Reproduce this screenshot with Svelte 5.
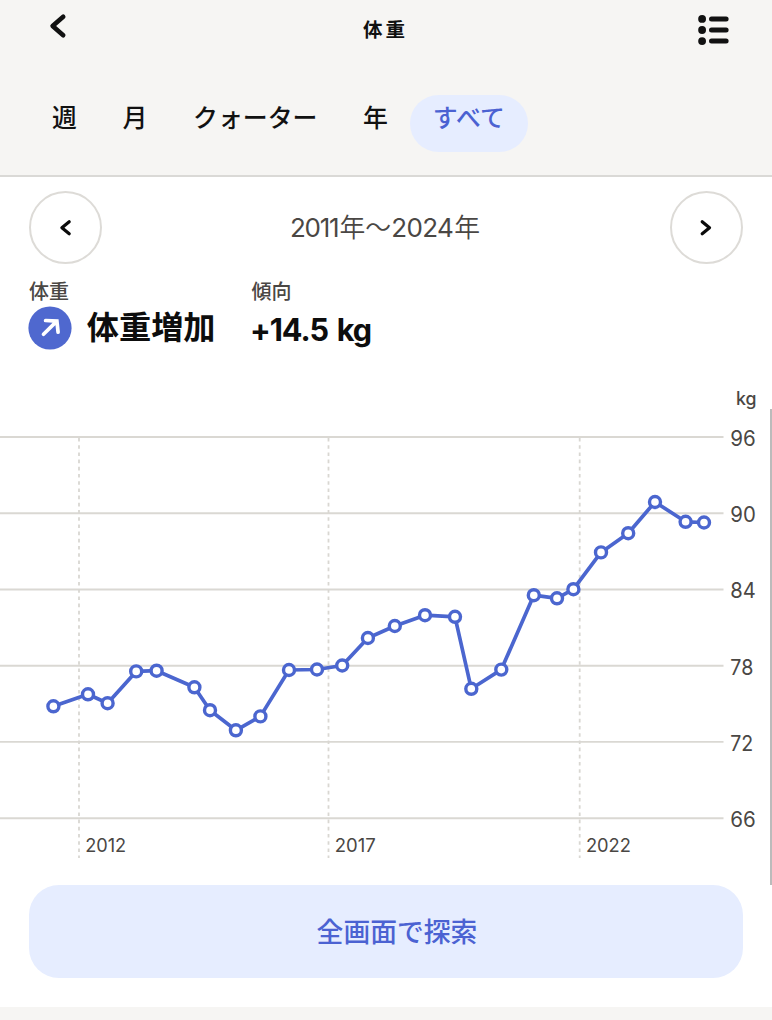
<script>
  const tabs = ['週', '月', 'クォーター', '年', 'すべて'];
  let active = $state('すべて');
  const ticks = [
    { label: '96', y: 57 },
    { label: '90', y: 133.3 },
    { label: '84', y: 209.5 },
    { label: '78', y: 285.8 },
    { label: '72', y: 361.9 },
    { label: '66', y: 438.2 }
  ];
  const years = [
    { label: '2012', x: 79, w: 41 },
    { label: '2017', x: 328.5, w: 41 },
    { label: '2022', x: 579.7, w: 45 }
  ];
  const points = [
    [53.4, 326.3], [88, 314.3], [107.6, 323.2], [136.2, 291.4], [156.6, 290.7],
    [194.4, 307.3], [210, 330.2], [235.9, 350.3], [260.4, 336.4], [289, 290],
    [317, 289.5], [342.2, 285.5], [367.9, 258], [394.8, 246], [425, 235.2],
    [455, 236.8], [471.3, 308.8], [501.3, 289.6], [533.8, 215.2], [557, 218.3],
    [573.4, 209.2], [601, 172.4], [628.2, 153.2], [655, 122], [685.6, 141.8], [704, 142.5]
  ];
  const line = points.map((p) => p.join(',')).join(' ');
</script>

<div class="screen">
  <header>
    <div class="bar">
      <button class="back" aria-label="戻る">
        <svg width="18" height="26" viewBox="0 0 18 26"><path d="M14.2 3.7 3.6 13l10.6 9.3" fill="none" stroke="#111" stroke-width="4.6" stroke-linecap="round" stroke-linejoin="round" /></svg>
      </button>
      <h1>体重</h1>
      <button class="list" aria-label="一覧">
        <svg width="32" height="32" viewBox="0 0 32 32" fill="#111">
          {#each [4.9, 16, 27.1] as y}
            <circle cx="4.1" cy={y} r="3.9" />
            <rect x="11" y={y - 2.5} width="19.6" height="5" rx="2.5" />
          {/each}
        </svg>
      </button>
    </div>
    <nav>
      {#each tabs as tab}
        <button class="tab" class:active={tab === active} onclick={() => (active = tab)}>{tab}</button>
      {/each}
    </nav>
  </header>

  <main>
    <div class="range">
      <button class="round" aria-label="前へ">
        <svg width="14" height="18" viewBox="0 0 14 18"><path d="M10.2 2.8 2.9 8.8l7.3 6" fill="none" stroke="#0b0b0b" stroke-width="3.2" stroke-linecap="round" stroke-linejoin="round" /></svg>
      </button>
      <div class="dates"><span class="y11">2011</span><span class="cj">年〜</span><span class="y24">2024</span><span class="cj">年</span></div>
      <button class="round" aria-label="次へ">
        <svg width="14" height="18" viewBox="0 0 14 18"><path d="M3.2 2.8 10.5 8.8l-7.3 6" fill="none" stroke="#0b0b0b" stroke-width="3.2" stroke-linecap="round" stroke-linejoin="round" /></svg>
      </button>
    </div>

    <section class="stats">
      <div class="stat first">
        <div class="label">体重</div>
        <div class="value">
          <svg class="arrow" width="44" height="44" viewBox="0 0 44 44">
            <circle cx="22" cy="22" r="21.6" fill="#4f68cf" />
            <path d="M15.5 28.2 28.6 15.4M17.6 14.5 28.9 15.1 30.1 26.2" fill="none" stroke="#fff" stroke-width="3.7" stroke-linecap="round" stroke-linejoin="miter" />
          </svg>
          <span>体重増加</span>
        </div>
      </div>
      <div class="stat">
        <div class="label">傾向</div>
        <div class="value num">+14.5 kg</div>
      </div>
    </section>

    <svg class="chart" width="772" height="500" viewBox="0 0 772 500">
      <text class="unit" x="736" y="25" textLength="20.5" lengthAdjust="spacingAndGlyphs">kg</text>
      {#each ticks as t}
        <line x1="0" x2="723.5" y1={t.y} y2={t.y} stroke="#dad8d3" stroke-width="1.9" />
        <text class="tick" x="730.3" y={t.y + 8.7} textLength={t.label[0] === '7' ? 23 : 25.5} lengthAdjust="spacingAndGlyphs">{t.label}</text>
      {/each}
      {#each years as year}
        <line x1={year.x} x2={year.x} y1="58" y2="478" stroke="#d9d7d2" stroke-width="1.8" stroke-dasharray="3.6 3.6" />
        <text class="year" x={year.x + 6.2} y="472" textLength={year.w} lengthAdjust="spacingAndGlyphs">{year.label}</text>
      {/each}
      <polyline points={line} fill="none" stroke="#4b66cf" stroke-width="3.7" stroke-linejoin="round" />
      {#each points as [x, y]}
        <circle cx={x} cy={y} r="5.5" fill="#fff" stroke="#4b66cf" stroke-width="3.4" />
      {/each}
    </svg>

    <button class="explore">全画面で探索</button>
    <div class="scrollbar"></div>
  </main>
</div>

<style>
  :global(body) { margin: 0; background: #f6f5f3; }
  .screen {
    width: 772px;
    height: 1020px;
    overflow: hidden;
    background: #f6f5f3;
    color: #111;
    font-family: Inter, 'Noto Sans CJK JP', sans-serif;
  }
  button { border: 0; margin: 0; padding: 0; background: none; color: inherit; font-family: inherit; cursor: pointer; }
  svg { display: block; }
  header { height: 177px; box-sizing: border-box; border-bottom: 2px solid #dad9d6; }
  .bar { display: grid; grid-template-columns: 1fr auto 1fr; height: 60px; align-items: center; }
  .back { justify-self: start; margin: 0 0 8px 49px; }
  .list { justify-self: end; margin-right: 42px; }
  h1 { margin: 0 0 0 -1px; font-size: 19.5px; line-height: 28px; font-weight: 700; letter-spacing: 3px; }
  nav { display: flex; padding: 35px 0 0 29.2px; }
  .tab {
    height: 57px;
    padding: 0 22.8px 12px;
    border-radius: 28.5px;
    font-size: 24.9px;
    line-height: 36px;
    font-weight: 500;
    white-space: nowrap;
  }
  .tab.active { width: 118.5px; padding: 0 0 12px; margin-left: -1.2px; background: #e6edff; color: #4b62d2; }
  main { position: relative; height: 830px; background: #fff; }
  .range { display: flex; justify-content: space-between; align-items: center; padding: 14px 29px 0; }
  .round {
    display: flex;
    align-items: center;
    justify-content: center;
    width: 73px;
    height: 73px;
    box-sizing: border-box;
    border: 2px solid #dddbd7;
    border-radius: 50%;
  }
  .dates { display: flex; align-items: baseline; margin: 0 2px 2px 0; line-height: 36px; color: #4a4744; font-size: 26px; }
  .y11 { width: 49.5px; letter-spacing: -1.3px; }
  .y24 { width: 63px; letter-spacing: -0.6px; }
  .cj { font-family: 'Noto Sans CJK JP', sans-serif; font-weight: 350; font-size: 25.8px; }
  .stats { display: flex; padding: 14px 29px 0; height: 102px; box-sizing: border-box; }
  .first { width: 222.5px; }
  .label { font-size: 20px; line-height: 28px; font-weight: 500; color: #4a4744; }
  .value { display: flex; align-items: center; height: 48px; margin-top: -2px; font-size: 32.2px; font-weight: 700; color: #0d0d0d; white-space: nowrap; }
  .value span { margin-left: 14.6px; line-height: 46px; }
  .arrow { margin-left: -0.8px; }
  .num { height: 50px; font-size: 30.6px; letter-spacing: -1.05px; word-spacing: 2.6px; margin-left: -1.5px; }
  .chart { margin-top: 14px; }
  .chart text { font-family: Inter, sans-serif; fill: #4a4744; }
  .unit { font-size: 18px; font-weight: 500; }
  .tick { font-size: 20.8px; }
  .year { font-size: 19px; }
  .explore {
    display: block;
    width: 714px;
    height: 93px;
    margin: 5px 0 0 29px;
    padding-left: 22px;
    border-radius: 30px;
    background: #e6edff;
    color: #4b62d2;
    font-size: 26.8px;
    line-height: 40px;
    font-weight: 500;
  }
  .scrollbar { position: absolute; right: 0; top: 232px; width: 2px; height: 476px; background: #bbb; }
</style>
